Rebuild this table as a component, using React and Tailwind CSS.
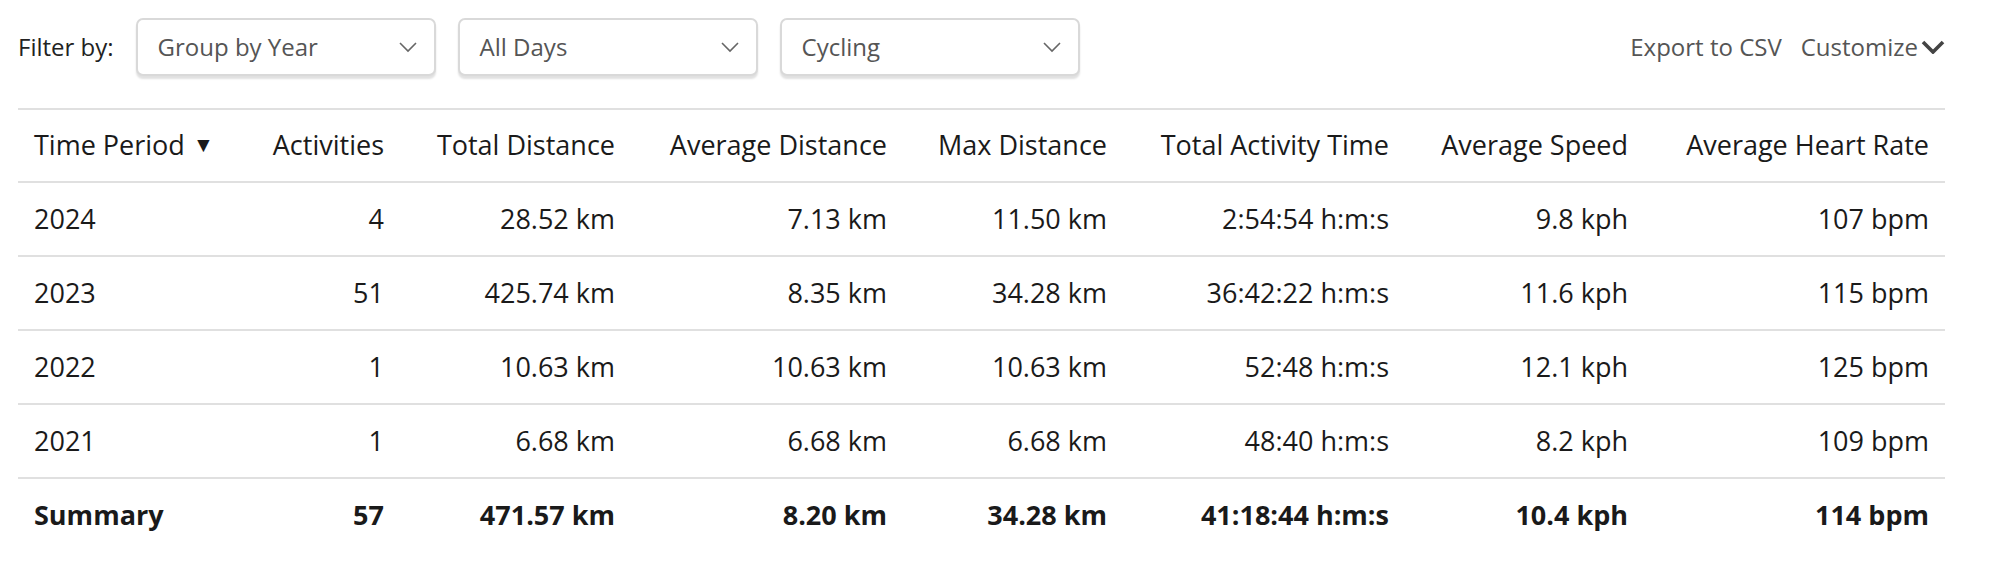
import React from 'react';

const columns = [
  { label: 'Time Period', w: 'w-[230px]', left: true },
  { label: 'Activities', w: 'w-[152px]' },
  { label: 'Total Distance', w: 'w-[231px]' },
  { label: 'Average Distance', w: 'w-[272px]' },
  { label: 'Max Distance', w: 'w-[220px]' },
  { label: 'Total Activity Time', w: 'w-[282px]' },
  { label: 'Average Speed', w: 'w-[239px]' },
  { label: 'Average Heart Rate', w: 'w-[301px]' },
];

const rows = [
  ['2024', '4', '28.52 km', '7.13 km', '11.50 km', '2:54:54 h:m:s', '9.8 kph', '107 bpm'],
  ['2023', '51', '425.74 km', '8.35 km', '34.28 km', '36:42:22 h:m:s', '11.6 kph', '115 bpm'],
  ['2022', '1', '10.63 km', '10.63 km', '10.63 km', '52:48 h:m:s', '12.1 kph', '125 bpm'],
  ['2021', '1', '6.68 km', '6.68 km', '6.68 km', '48:40 h:m:s', '8.2 kph', '109 bpm'],
];

const summary = ['Summary', '57', '471.57 km', '8.20 km', '34.28 km', '41:18:44 h:m:s', '10.4 kph', '114 bpm'];

const Select = ({ label }) => (
  <div className="flex items-center justify-between w-[300px] h-[58px] pl-[20px] pr-[16px] bg-white border-2 border-[#d9d9d9] rounded-[7px] shadow-[0_3px_2px_rgba(0,0,0,0.12)] text-[#555] text-[24px]">
    <span>{label}</span>
    <svg width="20" height="12" viewBox="0 0 20 12" fill="none" stroke="#666" strokeWidth="1.6">
      <path d="M2 2l8 8 8-8" />
    </svg>
  </div>
);

const App = () => {
  return (
    <div className="w-[1996px] h-[576px] bg-white font-['Open_Sans',sans-serif] text-[#1a1a1a]">
      {/* Filter bar */}
      <div className="flex items-center justify-between pl-[18px] pr-[51px] pt-[18px]">
        <div className="flex items-center">
          <span className="text-[24px] text-[#222] mr-[22px]">Filter by:</span>
          <div className="flex gap-[22px]">
            <Select label="Group by Year" />
            <Select label="All Days" />
            <Select label="Cycling" />
          </div>
        </div>
        <div className="flex items-center text-[24px] text-[#555]">
          <span>Export to CSV</span>
          <span className="ml-[19px]">Customize</span>
          <svg className="ml-[3px]" width="24" height="14" viewBox="0 0 24 14" fill="none" stroke="#444" strokeWidth="3.6">
            <path d="M2 2l10 10 10-10" />
          </svg>
        </div>
      </div>

      {/* Table */}
      <div className="px-[18px] pt-[32px] w-[1963px]">
        <table className="table-fixed w-[1927px] border-collapse text-[27px]">
          <thead>
            <tr className="border-t-2 border-b-2 border-[#e0e0e0]">
              {columns.map((c) => (
                <th
                  key={c.label}
                  className={`${c.w} h-[73px] px-[16px] font-normal whitespace-nowrap ${c.left ? 'text-left' : 'text-right'}`}
                >
                  {c.label}
                  {c.left && <span className="text-[21px] ml-[8px] align-[3px]">▼</span>}
                </th>
              ))}
            </tr>
          </thead>
          <tbody>
            {rows.map((r) => (
              <tr key={r[0]} className="border-b-2 border-[#e0e0e0]">
                {r.map((v, i) => (
                  <td key={i} className={`h-[74px] px-[16px] whitespace-nowrap ${i === 0 ? 'text-left' : 'text-right'}`}>
                    {v}
                  </td>
                ))}
              </tr>
            ))}
            <tr>
              {summary.map((v, i) => (
                <td key={i} className={`h-[74px] px-[16px] font-bold whitespace-nowrap ${i === 0 ? 'text-left' : 'text-right'}`}>
                  {v}
                </td>
              ))}
            </tr>
          </tbody>
        </table>
      </div>
    </div>
  );
};

export default App;
